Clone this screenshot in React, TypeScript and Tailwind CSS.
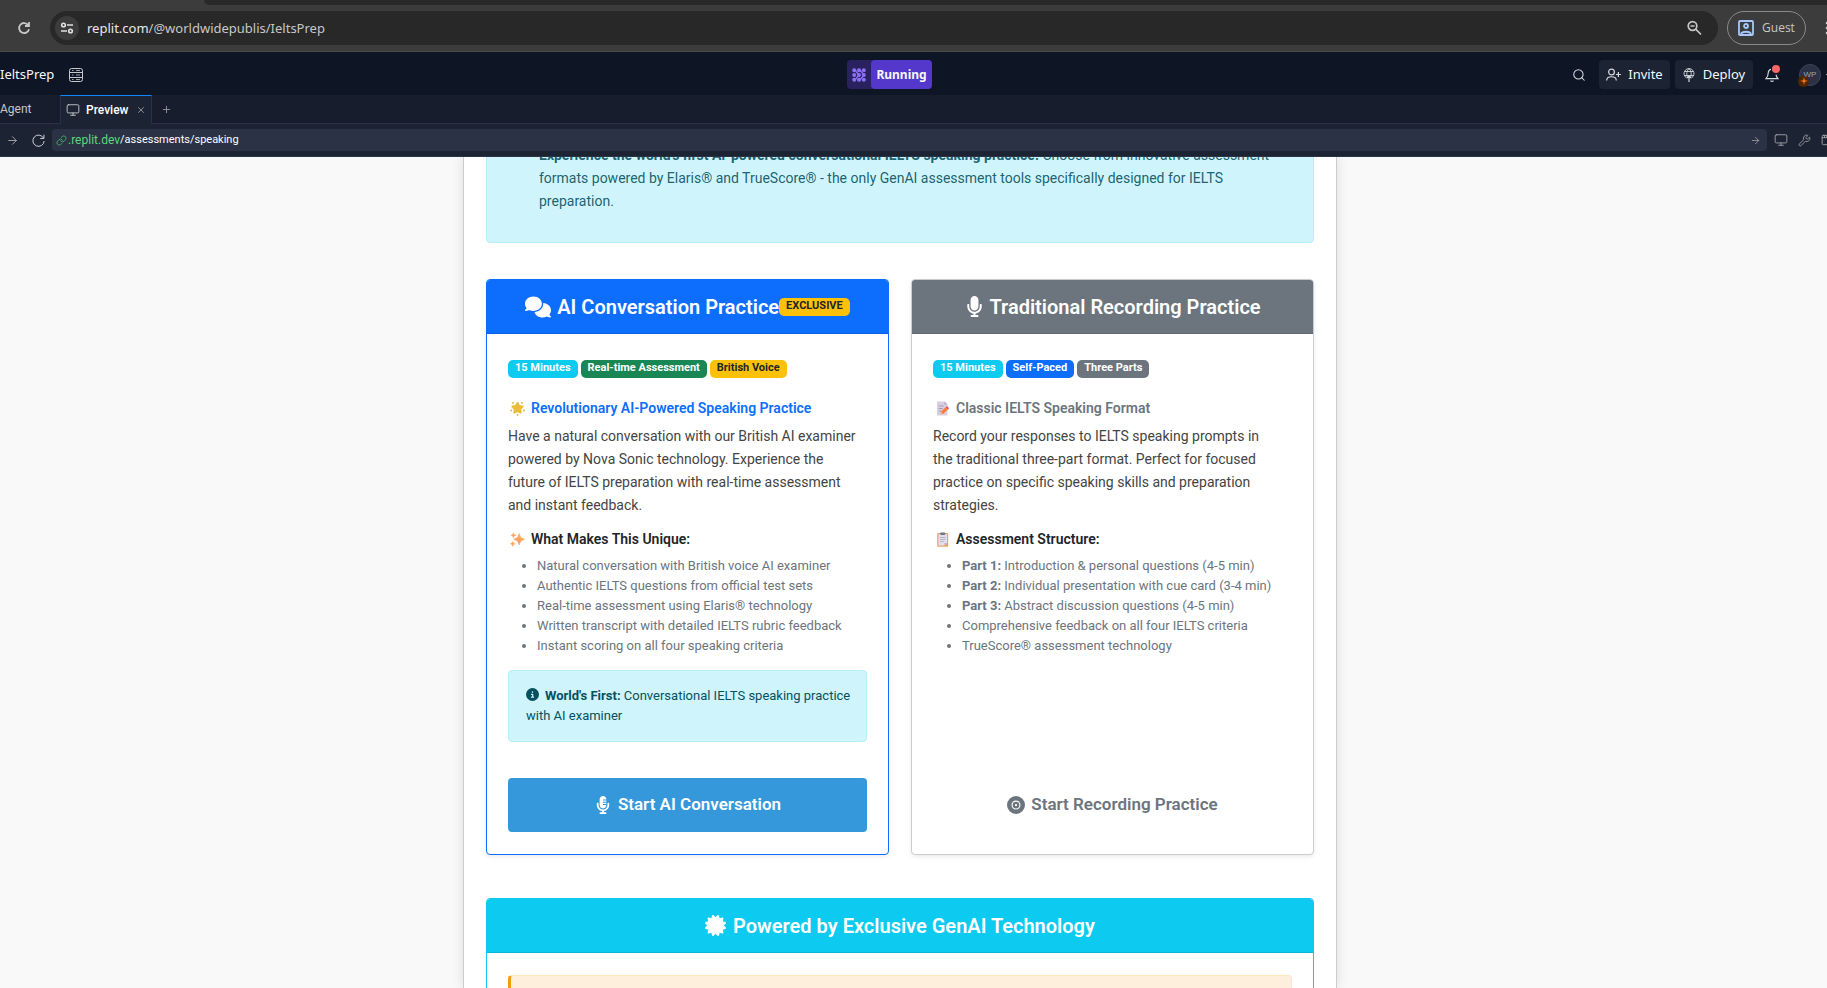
import type { ReactNode } from "react";
import { FaComments, FaCircleInfo, FaCertificate, FaRecordVinyl } from "react-icons/fa6";
import { FaMicrophone, FaMicrophoneAlt } from "react-icons/fa";
import { ArrowRight, Link, Monitor, Plus, Search, Wrench, X, AppWindow } from "lucide-react";

function ReloadIcon({ className }: { className: string }) {
  return (
    <svg viewBox="0 0 16 16" className={className} fill="none" stroke="currentColor">
      <path d="M13.2 5.2A6 6 0 1 0 14 8.6" />
      <path d="M13.8 1.8v4h-4" />
    </svg>
  );
}

function BrowserBar() {
  return (
    <div className="border-b border-[#4a4a4a] bg-[#3c3c3c]">
      <div className="ml-[204px] h-[5px] rounded-bl-[8px] bg-[#292929]" />
      <div className="flex h-[46px] items-center">
        <button aria-label="Reload" className="mr-[18px] ml-[16px] text-[#c7c7c7]">
          <svg viewBox="0 0 16 16" className="size-4" fill="none" stroke="currentColor" strokeWidth="1.8">
            <path d="M12.2 5.1A5 5 0 1 0 13 9.2" />
            <path d="M13 2v4H9" />
          </svg>
        </button>
        <div className="flex h-[34px] flex-1 items-center rounded-full bg-[#282828] pr-[16px] pl-[5px]">
          <button aria-label="Site information" className="flex size-6 items-center justify-center rounded-full bg-[#3c3c3c] text-[#e0e0e0]">
            <svg viewBox="0 0 14 14" className="size-[14px]" fill="none" stroke="currentColor" strokeWidth="1.6">
              <circle cx="3.5" cy="4" r="1.8" />
              <path d="M7 4h6M1 10h6" />
              <circle cx="10.5" cy="10" r="1.8" />
            </svg>
          </button>
          <div className="ml-2 flex-1 font-['Noto_Sans',sans-serif] text-[13px] leading-5 text-[#c7c7c7]">
            <span className="text-[#e8e8e8]">replit.com</span>/@worldwidepublis/IeltsPrep
          </div>
          <button aria-label="Zoom" className="text-[#c7c7c7]">
            <svg viewBox="0 0 16 16" className="size-4" fill="none" stroke="currentColor" strokeWidth="1.7">
              <circle cx="6.5" cy="6" r="4.3" />
              <path d="M9.7 9.2 15 14.5M4.5 6h4" />
            </svg>
          </button>
        </div>
        <button className="ml-[9px] flex h-[34px] w-[79px] items-center justify-center gap-2 rounded-full border border-[#8a8a8a] font-['Open_Sans',sans-serif] text-[12px] text-[#c7c7c7]">
          <svg viewBox="0 0 16 16" className="size-4" fill="none" stroke="#a8c7fa" strokeWidth="1.8">
            <rect x="1" y="1" width="14" height="14" rx="1" />
            <circle cx="8" cy="6" r="2" />
            <path d="M3 14c1-3 9-3 10 0" />
          </svg>
          Guest
        </button>
        <button aria-label="Browser menu" className="ml-[19px] w-[2px] overflow-hidden text-[#c7c7c7]">
          <svg viewBox="0 0 4 16" className="h-4 w-1" fill="currentColor">
            <circle cx="2" cy="3" r="1.3" />
            <circle cx="2" cy="8" r="1.3" />
            <circle cx="2" cy="13" r="1.3" />
          </svg>
        </button>
      </div>
    </div>
  );
}

function WorkspaceHeader() {
  return (
    <header className="grid h-[43px] grid-cols-[1fr_auto_1fr] items-center bg-[#0e1525] pt-[2px] font-['Noto_Sans',sans-serif] text-[#f5f9fc]">
      <div className="flex items-center gap-[15px] text-[13px]">
        <span>IeltsPrep</span>
        <svg viewBox="0 0 14 14" className="size-[14px]" fill="none" stroke="#c2c8cc">
          <rect x=".5" y=".5" width="13" height="13" rx="2" />
          <path d="M.5 4.500h13M.5 9.500h13" />
          <path d="M3 2.500h1.500M7 2.500h4M3 7h1.500M7 7h4M3 11.500h1.500M7 11.500h4" strokeWidth=".8" />
        </svg>
      </div>
      <div className="-ml-[48px] flex h-[29px] rounded-[4px] bg-[#2a2260]">
        <div className="flex w-[24px] items-center justify-center">
          <svg viewBox="0 0 14 14" className="size-[14px]" fill="#8b6ff5">
            <circle cx="2.2" cy="2.2" r="2" /><circle cx="7" cy="2.2" r="2" /><circle cx="11.8" cy="2.2" r="2" />
            <circle cx="2.2" cy="7" r="2" /><circle cx="7" cy="7" r="2" /><circle cx="11.8" cy="7" r="2" />
            <circle cx="2.2" cy="11.8" r="2" /><circle cx="7" cy="11.8" r="2" /><circle cx="11.8" cy="11.8" r="2" />
            <path d="M2 1l5 6-5 6M7 1l5 6-5 6" fill="none" stroke="#8b6ff5" strokeWidth="1.4" />
          </svg>
        </div>
        <button className="w-[61px] rounded-[4px] bg-[#5338cb] text-[12px] font-bold">Running</button>
      </div>
      <div className="flex items-center justify-end overflow-hidden text-[13px]">
        <button aria-label="Search" className="mr-[13px] text-[#d5dade]"><Search className="size-[14px]" strokeWidth={1.8} /></button>
        <button className="mr-[5px] flex h-[29px] w-[71px] items-center justify-center gap-[7px] rounded-[4px] bg-[#1c2333]">
          <svg viewBox="0 0 15 14" className="h-[14px] w-[15px]" fill="none" stroke="#d5dade" strokeWidth="1.2">
            <circle cx="5.5" cy="4" r="2.9" />
            <path d="M.7 12.5c0-5 9.6-5 9.6 0M12.4 4v5M9.9 6.5h5" />
          </svg>
          Invite
        </button>
        <button className="flex h-[29px] w-[78px] items-center justify-center gap-[8px] rounded-[4px] bg-[#1c2333]">
          <svg viewBox="0 0 12 14" className="h-[14px] w-[12px]" fill="none" stroke="#d5dade" strokeWidth=".9">
            <path d="M3.600 10A5 5 0 1 1 8.400 10" />
            <path d="M1.500 3.500h9M1.500 7.500h9" />
            <path d="M4.300 9C3.200 6 3.800 2.500 6 .6 8.200 2.500 8.800 6 7.700 9" />
            <path d="M6 8v6M4 10l2-2 2 2" strokeWidth="1.200" />
          </svg>
          Deploy
        </button>
        <button aria-label="Notifications" className="relative ml-[12px] text-[#d5dade]">
          <svg viewBox="0 0 14 14" className="size-[14px]" fill="none" stroke="currentColor" strokeWidth="1.1">
            <path d="M6 1.300C4.200 1.800 3.200 3.300 3.200 5 3.200 8 2 9.500 1 10.600h12c-1-1.100-1.800-2-2-4M5.500 12.600c.8 1 2.200 1 3 0" />
          </svg>
          <span className="absolute -top-[3px] left-[7px] size-2 rounded-full bg-[#ff6666]" />
        </button>
        <div className="relative ml-[20px] flex size-[22px] items-center justify-center rounded-full border border-[#3c445c] bg-[#2b3245] font-['Liberation_Sans',sans-serif] text-[8px] text-[#9da2a6]">
          WP
          <span className="absolute top-[11px] -left-[2px] flex size-[11px] items-center justify-center rounded-full bg-[#4f2600]">
            <svg viewBox="0 0 8 8" className="size-2" fill="#ff7a1a"><path d="M4 0 4.800 3.200 8 4 4.800 4.800 4 8 3.200 4.800 0 4 3.200 3.200z" /></svg>
          </span>
        </div>
        <span className="ml-[5px] h-px w-px bg-[#9da2a6]" />
      </div>
    </header>
  );
}

function TabRow() {
  return (
    <nav className="flex h-[29px] border-b border-[#2b3245] bg-[#171d2d] font-['Noto_Sans',sans-serif] text-[12px] text-[#c2c8cc]">
      <button className="w-[60px] pr-[31px] text-right font-['Roboto',sans-serif]">Agent</button>
      <div className="-mb-px flex w-[92px] items-center border-x border-t border-x-[#2b3245] border-t-[#0f87ff] bg-[#1c2333] pl-[5px] text-white">
        <Monitor className="size-[14px] text-[#c2c8cc]" strokeWidth={1.6} />
        <span className="ml-[6px] flex-1 font-['Roboto',sans-serif] font-medium">Preview</span>
        <button aria-label="Close tab" className="mr-[5px] text-[#9da2a6]"><X className="size-[10px]" /></button>
      </div>
      <button aria-label="New tab" className="ml-[9px] text-[#9da2a6]"><Plus className="size-[11px]" strokeWidth={1.8} /></button>
    </nav>
  );
}

function AddressRow() {
  return (
    <div className="flex h-[33px] items-center overflow-hidden border-b border-[#2b3245] bg-[#1c2333] font-['Roboto',sans-serif] text-[#9da2a6]">
      <button aria-label="Forward" className="ml-[6px]"><ArrowRight className="size-[13px]" strokeWidth={1.8} /></button>
      <button aria-label="Reload preview" className="ml-[12px] text-[#d5dade]"><ReloadIcon className="size-[15px]" /></button>
      <div className="ml-[6px] flex h-[22px] flex-1 items-center rounded-[4px] bg-[#2b3245] pr-[6px] pl-[4px] text-[11px]">
        <Link className="size-[11px] text-[#4cb86a]" strokeWidth={1.8} />
        <span className="ml-px text-[12px] text-[#5dd779]">.replit.dev</span>
        <span className="flex-1 text-white">/assessments/speaking</span>
        <ArrowRight className="size-[11px]" strokeWidth={1.8} />
      </div>
      <button aria-label="Device size" className="ml-[7px]"><Monitor className="size-[14px]" strokeWidth={1.6} /></button>
      <button aria-label="Developer tools" className="ml-[10px]"><Wrench className="size-[13px]" strokeWidth={1.6} /></button>
      <div className="ml-[10px] w-[6px] overflow-hidden"><AppWindow className="size-[14px]" strokeWidth={1.6} /></div>
    </div>
  );
}

const badgeColors = {
  cyan: "bg-[#0dcaf0] text-white",
  green: "bg-[#198754] text-white",
  yellow: "bg-[#ffc107] text-[#212529]",
  blue: "bg-[#0d6efd] text-white",
  gray: "bg-[#6c757d] text-white",
};

function Badge({ color, children }: { color: keyof typeof badgeColors; children: ReactNode }) {
  return (
    <span className={`rounded-[5px] px-[7px] pb-[2px] text-[11px] leading-4 font-bold ${badgeColors[color]}`}>{children}</span>
  );
}

function GlowingStar() {
  return (
    <svg viewBox="0 0 15 15" className="size-[15px]">
      <path d="M7.500 2 9.100 5 12.600 5.600 10.200 8.100 10.700 11.600 7.500 10.100 4.300 11.600 4.800 8.100 2.400 5.600 5.900 5z" fill="#e8bd3a" stroke="#e8bd3a" strokeWidth="2" strokeLinejoin="round" />
      <g fill="#dfa73c">
        <circle cx="3" cy="1.800" r=".9" />
        <circle cx="12" cy="1.800" r=".9" />
        <circle cx="1.200" cy="9.500" r=".9" />
        <circle cx="13.800" cy="9.500" r=".9" />
        <circle cx="7.500" cy="13.800" r=".9" />
      </g>
    </svg>
  );
}

function Sparkles() {
  return (
    <svg viewBox="0 0 15 15" className="size-[15px]">
      <defs>
        <linearGradient id="spark" x1="0" y1="1" x2="1" y2="0">
          <stop offset="0" stopColor="#ff8f6b" />
          <stop offset="1" stopColor="#fbb94d" />
        </linearGradient>
      </defs>
      <g fill="url(#spark)" stroke="url(#spark)" strokeWidth=".5" strokeLinejoin="round">
        <path d="M9.200 1.500 10.900 5.500 14.700 7.200 10.900 8.900 9.200 13 7.500 8.900 3.700 7.200 7.500 5.500z" />
        <path d="M3.500.8 4.200 2.600 6 3.300 4.200 4 3.500 5.800 2.800 4 1 3.300 2.800 2.600z" />
        <path d="M2.800 9.300 3.500 11.100 5.300 11.800 3.500 12.500 2.800 14.300 2.100 12.500.5 11.800 2.100 11.100z" />
      </g>
    </svg>
  );
}

function Memo() {
  return (
    <svg viewBox="0 0 15 15" className="size-[15px]">
      <path d="M2 .5h7.500L12.500 3.500v11H2z" fill="#d9cfe3" />
      <path d="M9.500.5v3h3z" fill="#b3a6c2" />
      <path d="M3.700 5h5M3.700 7.500h4M3.700 10h2.500" stroke="#a79db3" />
      <path d="M5 13.800 5.800 10.800 8 13z" fill="#f3b087" />
      <path d="M5.900 10.700 10.600 6.300 12.900 8.500 8.100 13z" fill="#fb7a35" />
      <path d="M10.600 6.300 12 5 14.200 7.200 12.900 8.500z" fill="#e8506d" />
    </svg>
  );
}

function Clipboard() {
  return (
    <svg viewBox="0 0 15 15" className="size-[15px]">
      <rect x="2.200" y=".9" width="11" height="13.900" rx=".8" fill="#e8a468" />
      <path d="M3.400 2h8.600v8.900l-2.600 2.700H3.400z" fill="#e4dbef" />
      <path d="M12 10.900H9.400v2.700z" fill="#c9b3c4" />
      <rect x="5.200" y=".4" width="5" height="2.600" rx=".8" fill="#77727f" />
      <path d="M5 5.500h5.400M5 7.500h5.400M5 9.500h3.600" stroke="#b0a6bd" strokeWidth=".8" />
    </svg>
  );
}

function Heading({ icon, className, children }: { icon: ReactNode; className: string; children: ReactNode }) {
  return (
    <h3 className={`flex items-center gap-[6px] pl-[2px] text-[14px] leading-[17px] font-semibold ${className}`}>
      {icon}
      {children}
    </h3>
  );
}

function PracticeCard({ border, header, badges, children, action }: { border: string; header: ReactNode; badges: ReactNode; children: ReactNode; action: ReactNode }) {
  return (
    <section className={`flex flex-1 flex-col overflow-hidden rounded-[4px] border bg-white shadow-[0_2px_4px_rgba(0,0,0,0.08)] ${border}`}>
      {header}
      <div className="flex flex-1 flex-col px-[21px] pb-[22px]">
        <div className="mt-[26px] flex gap-[3px]">{badges}</div>
        {children}
        <div className="mt-auto flex">{action}</div>
      </div>
    </section>
  );
}

const cardTitle = "flex h-[54px] items-center justify-center border-b border-black/10 text-[20px] leading-6 font-semibold text-white";
const list = "mt-[8px] list-disc pl-[29px] text-[13px] leading-5 text-[#6c757d]";
const paragraph = "mt-[8px] text-[14px] leading-[23px] text-[#444444]";
const action = "flex h-[54px] flex-1 items-center justify-center gap-[6px] rounded-[4px] text-[17px] font-semibold";

function PreviewPage() {
  return (
    <main className="min-h-0 flex-1 overflow-hidden bg-[#f9f9f9] pr-[27px] font-['Roboto',sans-serif]">
      <div className="mx-auto h-full w-full max-w-[874px] overflow-hidden border-x border-[#cccccc] bg-white px-[22px] shadow-[0_0_12px_rgba(0,0,0,0.12)]">
        <div className="-mt-[40px] rounded-[4px] border border-[#b6effb] bg-[#cff4fc] pt-[26px] pr-[22px] pb-[29px] pl-[52px] text-[14px] leading-[23px] text-[#055160]/90">
          <strong>Experience the world's first AI-powered conversational IELTS speaking practice.</strong> Choose from innovative assessment
          <br />
          formats powered by Elaris® and TrueScore® - the only GenAI assessment tools specifically designed for IELTS
          <br />
          preparation.
        </div>

        <div className="mt-[36px] flex gap-[22px]">
          <PracticeCard
            border="border-[#0d6efd]"
            header={
              <h2 className={`bg-[#0d6efd] ${cardTitle}`}>
                <FaComments className="mr-[6px] size-[26px]" />
                AI Conversation Practice
                <Badge color="yellow">EXCLUSIVE</Badge>
              </h2>
            }
            badges={<><Badge color="cyan">15 Minutes</Badge><Badge color="green">Real-time Assessment</Badge><Badge color="yellow">British Voice</Badge></>}
            action={<button className={`bg-[#3498db] text-white ${action}`}><FaMicrophoneAlt className="size-[18px]" />Start AI Conversation</button>}
          >
            <Heading icon={<GlowingStar />} className="mt-[22px] text-[#0d6efd]">Revolutionary AI-Powered Speaking Practice</Heading>
            <p className={paragraph}>
              Have a natural conversation with our British AI examiner
              <br />
              powered by Nova Sonic technology. Experience the
              <br />
              future of IELTS preparation with real-time assessment
              <br />
              and instant feedback.
            </p>
            <Heading icon={<Sparkles />} className="mt-[14px] text-[#212529]">What Makes This Unique:</Heading>
            <ul className={list}>
              <li>Natural conversation with British voice AI examiner</li>
              <li>Authentic IELTS questions from official test sets</li>
              <li>Real-time assessment using Elaris® technology</li>
              <li>Written transcript with detailed IELTS rubric feedback</li>
              <li>Instant scoring on all four speaking criteria</li>
            </ul>
            <div className="mt-[14px] mb-[36px] rounded-[4px] border border-[#b6effb] bg-[#cff4fc] pt-[15px] pr-[5px] pb-[15px] pl-[17px] text-[13px] leading-5 text-[#055160]">
              <FaCircleInfo className="mr-[6px] inline-block size-[13px] align-[-1px]" />
              <strong>World's First:</strong> Conversational IELTS speaking practice with AI examiner
            </div>
          </PracticeCard>

          <PracticeCard
            border="border-[#cccccc]"
            header={
              <h2 className={`bg-[#6c757d] ${cardTitle}`}>
                <FaMicrophone className="mr-[4px] size-[21px]" />
                Traditional Recording Practice
              </h2>
            }
            badges={<><Badge color="cyan">15 Minutes</Badge><Badge color="blue">Self-Paced</Badge><Badge color="gray">Three Parts</Badge></>}
            action={<button className={`text-[#6c757d] ${action}`}><FaRecordVinyl className="size-[18px]" />Start Recording Practice</button>}
          >
            <Heading icon={<Memo />} className="mt-[22px] text-[#6c757d]">Classic IELTS Speaking Format</Heading>
            <p className={paragraph}>
              Record your responses to IELTS speaking prompts in
              <br />
              the traditional three-part format. Perfect for focused
              <br />
              practice on specific speaking skills and preparation
              <br />
              strategies.
            </p>
            <Heading icon={<Clipboard />} className="mt-[14px] text-[#212529]">Assessment Structure:</Heading>
            <ul className={list}>
              <li><strong>Part 1:</strong> Introduction &amp; personal questions (4-5 min)</li>
              <li><strong>Part 2:</strong> Individual presentation with cue card (3-4 min)</li>
              <li><strong>Part 3:</strong> Abstract discussion questions (4-5 min)</li>
              <li>Comprehensive feedback on all four IELTS criteria</li>
              <li>TrueScore® assessment technology</li>
            </ul>
          </PracticeCard>
        </div>

        <section className="mt-[43px] overflow-hidden rounded-[4px] border border-[#0dcaf0] bg-white">
          <h2 className={`bg-[#0dcaf0] ${cardTitle}`}>
            <FaCertificate className="mr-[7px] size-[21px]" />
            Powered by Exclusive GenAI Technology
          </h2>
          <div className="px-[21px] pt-[22px]">
            <div className="h-[120px] rounded-[4px] border border-l-[3px] border-[#ffe8bd] border-l-[#f39c12] bg-[#fdefdc]" />
          </div>
        </section>
      </div>
    </main>
  );
}

export default function App() {
  return (
    <div className="flex h-screen flex-col overflow-hidden">
      <BrowserBar />
      <WorkspaceHeader />
      <TabRow />
      <AddressRow />
      <PreviewPage />
    </div>
  );
}
